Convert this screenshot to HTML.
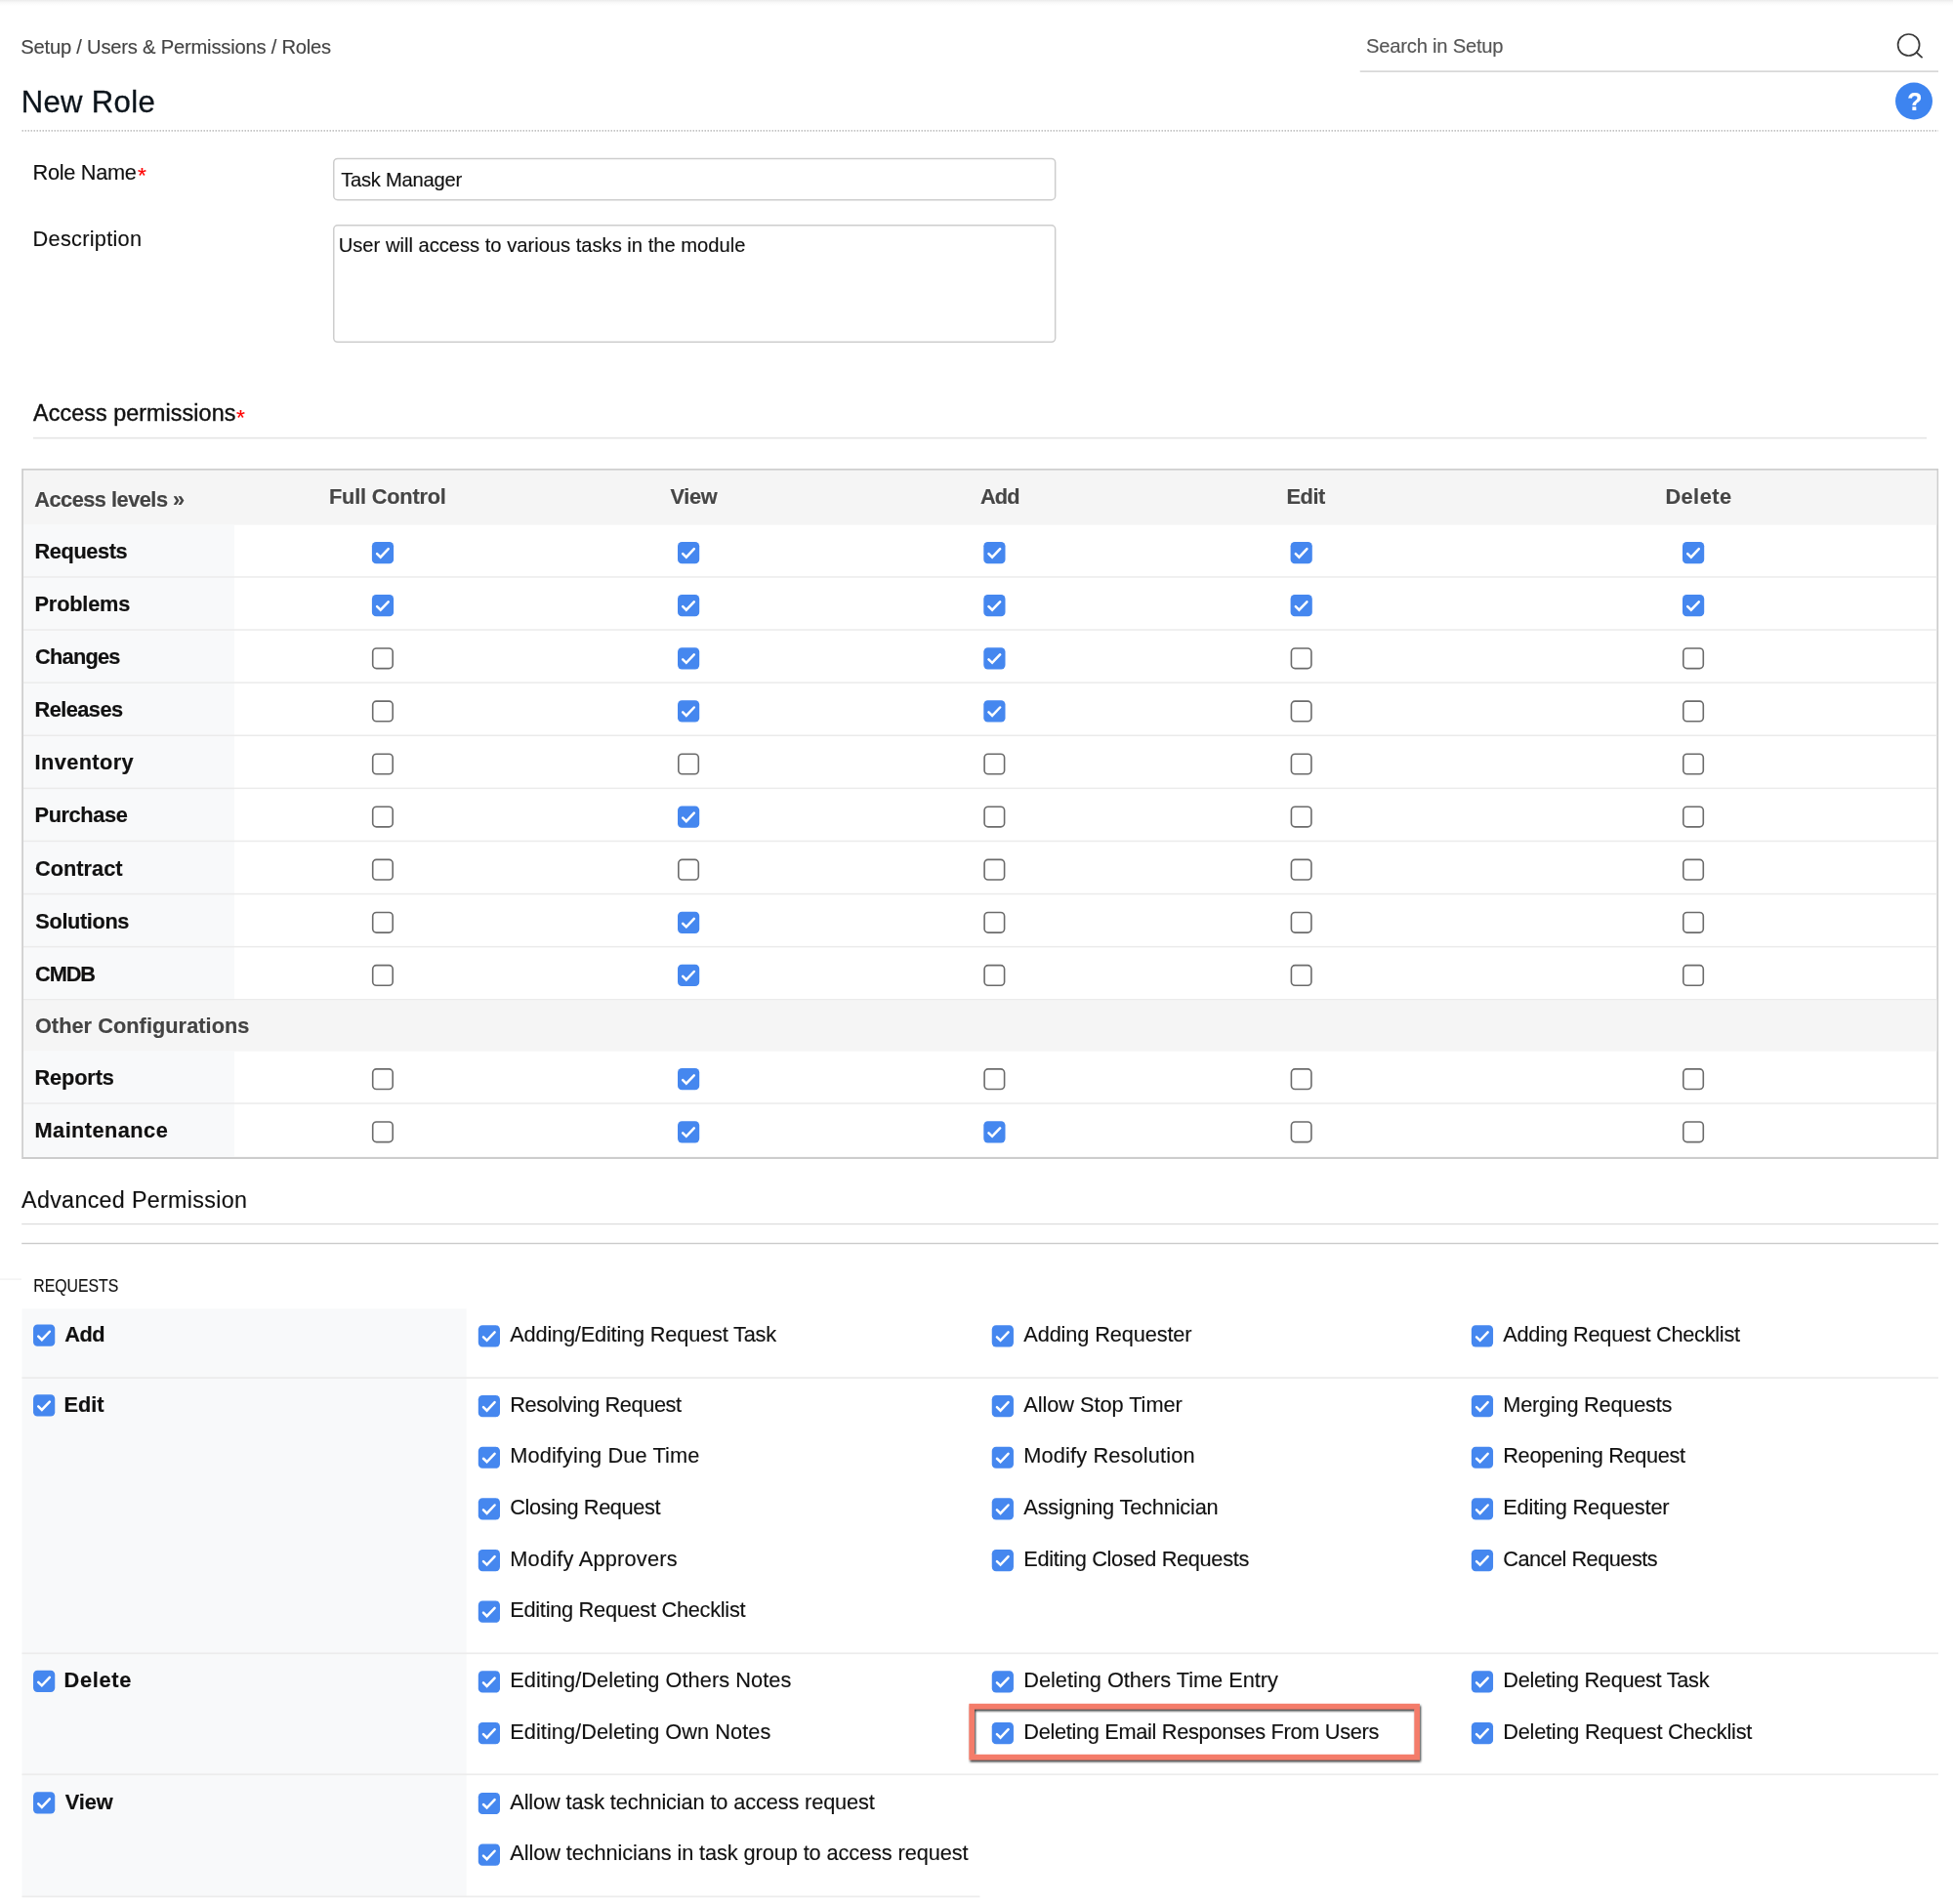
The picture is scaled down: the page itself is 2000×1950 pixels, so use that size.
<!DOCTYPE html>
<html lang="en"><head><meta charset="utf-8"><title>New Role</title>
<style>
html,body{margin:0;padding:0;background:#fff;}
body{width:2000px;height:1950px;position:relative;overflow:hidden;font-family:"Liberation Sans",sans-serif;}
.t{position:absolute;white-space:pre;line-height:1;}
.r{-webkit-text-stroke:0.14px currentColor;}
.bd{-webkit-text-stroke:0.2px currentColor;}
.b{position:absolute;}
#txt{position:absolute;left:0;top:0;width:2000px;height:1950px;will-change:transform;}
</style></head><body>

<div class="b" style="left:0;top:0;width:2000px;height:6px;background:linear-gradient(#ebebeb,#f9f9f9 45%,#fff);"></div>
<svg class="b" style="left:0;top:0" width="2000" height="1950" viewBox="0 0 2000 1950"><rect x="1392.70" y="72.50" width="592.30" height="1.20" fill="#c8c8c8" />
<line x1="22.5" y1="133.9" x2="1985" y2="133.9" stroke="#c4c4c4" stroke-width="1.7" stroke-dasharray="1.5 1.5"/>
<rect x="341.75" y="162.45" width="738.9" height="42.3" rx="4" fill="#fff" stroke="#cdcdcd" stroke-width="1.5"/>
<rect x="341.75" y="230.75" width="738.9" height="119.6" rx="4" fill="#fff" stroke="#cdcdcd" stroke-width="1.5"/>
<rect x="34.00" y="447.80" width="1939.00" height="1.60" fill="#e4e4e4" />
<rect x="22.20" y="479.90" width="1962.90" height="707.10" fill="#cdcdcd" />
<rect x="23.95" y="481.80" width="1959.40" height="703.10" fill="#fff" />
<rect x="23.95" y="481.80" width="1959.40" height="55.80" fill="#f5f5f5" />
<rect x="23.95" y="537.60" width="216.05" height="486.90" fill="#f8f9fa" />
<rect x="23.95" y="1024.50" width="1959.40" height="52.20" fill="#f5f5f5" />
<rect x="23.95" y="1076.70" width="216.05" height="108.20" fill="#f8f9fa" />
<rect x="23.95" y="590.20" width="1959.40" height="1.50" fill="#ebebeb" />
<rect x="23.95" y="644.30" width="1959.40" height="1.50" fill="#ebebeb" />
<rect x="23.95" y="698.40" width="1959.40" height="1.50" fill="#ebebeb" />
<rect x="23.95" y="752.50" width="1959.40" height="1.50" fill="#ebebeb" />
<rect x="23.95" y="806.60" width="1959.40" height="1.50" fill="#ebebeb" />
<rect x="23.95" y="860.70" width="1959.40" height="1.50" fill="#ebebeb" />
<rect x="23.95" y="914.80" width="1959.40" height="1.50" fill="#ebebeb" />
<rect x="23.95" y="968.90" width="1959.40" height="1.50" fill="#ebebeb" />
<rect x="23.95" y="1023.00" width="1959.40" height="1.50" fill="#ebebeb" />
<rect x="23.95" y="1129.30" width="1959.40" height="1.50" fill="#ebebeb" />
<rect x="22.20" y="1253.00" width="1962.90" height="1.20" fill="#dcdcdc" />
<rect x="22.20" y="1272.80" width="1962.90" height="1.40" fill="#cbcbcb" />
<rect x="0.00" y="1309.50" width="22.00" height="1.20" fill="#f0f0f0" />
<rect x="22.50" y="1340.30" width="455.20" height="601.50" fill="#f8f9fa" />
<rect x="22.50" y="1410.25" width="1962.50" height="1.70" fill="#ececec" />
<rect x="22.50" y="1692.45" width="1962.50" height="1.70" fill="#ececec" />
<rect x="22.50" y="1816.45" width="1962.50" height="1.70" fill="#ececec" />
<rect x="22.50" y="1941.55" width="980.90" height="1.70" fill="#ececec" />
<defs><g id="on"><rect width="22.2" height="22.2" rx="4.3" fill="#4587ef"/><path d="M5.2 12.1 L8.8 15.6 L16.8 7.2" fill="none" stroke="#fff" stroke-width="2.5" stroke-linecap="round" stroke-linejoin="miter"/></g><g id="off"><rect x="0.8" y="0.8" width="20.5" height="20.6" rx="3.8" fill="#fff" stroke="#6b6b6b" stroke-width="1.6"/></g><filter id="ds" x="-5%" y="-20%" width="110%" height="140%"><feDropShadow dx="1" dy="2" stdDeviation="1.3" flood-color="#000" flood-opacity="0.8"/></filter></defs>
<use href="#on" x="380.90" y="555.00"/>
<use href="#on" x="694.00" y="555.00"/>
<use href="#on" x="1007.30" y="555.00"/>
<use href="#on" x="1321.60" y="555.00"/>
<use href="#on" x="1723.00" y="555.00"/>
<use href="#on" x="380.90" y="609.10"/>
<use href="#on" x="694.00" y="609.10"/>
<use href="#on" x="1007.30" y="609.10"/>
<use href="#on" x="1321.60" y="609.10"/>
<use href="#on" x="1723.00" y="609.10"/>
<use href="#off" x="380.90" y="663.20"/>
<use href="#on" x="694.00" y="663.20"/>
<use href="#on" x="1007.30" y="663.20"/>
<use href="#off" x="1321.60" y="663.20"/>
<use href="#off" x="1723.00" y="663.20"/>
<use href="#off" x="380.90" y="717.30"/>
<use href="#on" x="694.00" y="717.30"/>
<use href="#on" x="1007.30" y="717.30"/>
<use href="#off" x="1321.60" y="717.30"/>
<use href="#off" x="1723.00" y="717.30"/>
<use href="#off" x="380.90" y="771.40"/>
<use href="#off" x="694.00" y="771.40"/>
<use href="#off" x="1007.30" y="771.40"/>
<use href="#off" x="1321.60" y="771.40"/>
<use href="#off" x="1723.00" y="771.40"/>
<use href="#off" x="380.90" y="825.50"/>
<use href="#on" x="694.00" y="825.50"/>
<use href="#off" x="1007.30" y="825.50"/>
<use href="#off" x="1321.60" y="825.50"/>
<use href="#off" x="1723.00" y="825.50"/>
<use href="#off" x="380.90" y="879.60"/>
<use href="#off" x="694.00" y="879.60"/>
<use href="#off" x="1007.30" y="879.60"/>
<use href="#off" x="1321.60" y="879.60"/>
<use href="#off" x="1723.00" y="879.60"/>
<use href="#off" x="380.90" y="933.70"/>
<use href="#on" x="694.00" y="933.70"/>
<use href="#off" x="1007.30" y="933.70"/>
<use href="#off" x="1321.60" y="933.70"/>
<use href="#off" x="1723.00" y="933.70"/>
<use href="#off" x="380.90" y="987.80"/>
<use href="#on" x="694.00" y="987.80"/>
<use href="#off" x="1007.30" y="987.80"/>
<use href="#off" x="1321.60" y="987.80"/>
<use href="#off" x="1723.00" y="987.80"/>
<use href="#off" x="380.90" y="1094.10"/>
<use href="#on" x="694.00" y="1094.10"/>
<use href="#off" x="1007.30" y="1094.10"/>
<use href="#off" x="1321.60" y="1094.10"/>
<use href="#off" x="1723.00" y="1094.10"/>
<use href="#off" x="380.90" y="1148.20"/>
<use href="#on" x="694.00" y="1148.20"/>
<use href="#on" x="1007.30" y="1148.20"/>
<use href="#off" x="1321.60" y="1148.20"/>
<use href="#off" x="1723.00" y="1148.20"/>
<use href="#on" x="34.05" y="1356.55"/>
<use href="#on" x="34.05" y="1428.35"/>
<use href="#on" x="34.05" y="1710.70"/>
<use href="#on" x="34.05" y="1835.25"/>
<use href="#on" x="489.80" y="1357.20"/>
<use href="#on" x="1015.75" y="1357.20"/>
<use href="#on" x="1506.85" y="1357.20"/>
<use href="#on" x="489.80" y="1429.00"/>
<use href="#on" x="1015.75" y="1429.00"/>
<use href="#on" x="1506.85" y="1429.00"/>
<use href="#on" x="489.80" y="1481.65"/>
<use href="#on" x="1015.75" y="1481.65"/>
<use href="#on" x="1506.85" y="1481.65"/>
<use href="#on" x="489.80" y="1534.30"/>
<use href="#on" x="1015.75" y="1534.30"/>
<use href="#on" x="1506.85" y="1534.30"/>
<use href="#on" x="489.80" y="1586.95"/>
<use href="#on" x="1015.75" y="1586.95"/>
<use href="#on" x="1506.85" y="1586.95"/>
<use href="#on" x="489.80" y="1639.60"/>
<use href="#on" x="489.80" y="1711.35"/>
<use href="#on" x="1015.75" y="1711.35"/>
<use href="#on" x="1506.85" y="1711.35"/>
<use href="#on" x="489.80" y="1764.00"/>
<use href="#on" x="1015.75" y="1764.00"/>
<use href="#on" x="1506.85" y="1764.00"/>
<use href="#on" x="489.80" y="1835.90"/>
<use href="#on" x="489.80" y="1888.55"/>
<rect x="995.15" y="1747.6" width="456" height="52" fill="none" stroke="#f47c6b" stroke-width="5.6" filter="url(#ds)"/>
<circle cx="1954.6" cy="46" r="11" fill="none" stroke="#3a3a3a" stroke-width="1.7"/><path d="M1962.6 53.6 L1968 58.6" stroke="#3a3a3a" stroke-width="1.9" stroke-linecap="round"/>
<circle cx="1960" cy="103.5" r="19" fill="#3d84f0"/></svg>
<div id="txt">
<span class="t r" id="t0" style="left:21.28px;top:37.90px;font-size:20.2px;font-weight:400;color:#444;letter-spacing:-0.218px;">Setup / Users &amp; Permissions / Roles</span>
<span class="t" id="t1" style="left:21.75px;top:88.96px;font-size:31.08px;font-weight:400;color:#0c141b;letter-spacing:0.314px;-webkit-text-stroke:0.3px #0c141b;">New Role</span>
<span class="t r" id="t2" style="left:1399.08px;top:36.90px;font-size:20.2px;font-weight:400;color:#555;letter-spacing:-0.228px;">Search in Setup</span>
<span class="t r" id="t3" style="left:33.61px;top:165.62px;font-size:21.76px;font-weight:400;color:#111;letter-spacing:-0.318px;">Role Name</span>
<span class="t r" id="t4" style="left:140.93px;top:167.60px;font-size:22.79px;font-weight:400;color:#f00;">*</span>
<span class="t r" id="t5" style="left:33.61px;top:233.62px;font-size:21.76px;font-weight:400;color:#111;letter-spacing:0.260px;">Description</span>
<span class="t r" id="t6" style="left:349.15px;top:173.90px;font-size:20.2px;font-weight:400;color:#111;letter-spacing:-0.246px;">Task Manager</span>
<span class="t r" id="t7" style="left:346.74px;top:240.90px;font-size:20.2px;font-weight:400;color:#111;letter-spacing:-0.016px;">User will access to various tasks in the module</span>
<span class="t" id="t8" style="left:34.05px;top:412.35px;font-size:23.31px;font-weight:400;color:#111;letter-spacing:0.084px;-webkit-text-stroke:0.4px #111;">Access permissions</span>
<span class="t r" id="t9" style="left:241.93px;top:415.61px;font-size:22.79px;font-weight:400;color:#f00;">*</span>
<span class="t bd" id="t10" style="left:35.26px;top:500.62px;font-size:21.76px;font-weight:700;color:#444;letter-spacing:-0.495px;text-shadow:0 0 2px #fff,0 0 2px #fff;">Access levels »</span>
<span class="t bd" id="t11" style="left:337.04px;top:497.62px;font-size:21.76px;font-weight:700;color:#464646;letter-spacing:-0.202px;text-shadow:0 0 2px #fff,0 0 2px #fff;">Full Control</span>
<span class="t bd" id="t12" style="left:686.45px;top:497.62px;font-size:21.76px;font-weight:700;color:#464646;letter-spacing:-0.355px;text-shadow:0 0 2px #fff,0 0 2px #fff;">View</span>
<span class="t bd" id="t13" style="left:1003.96px;top:497.62px;font-size:21.76px;font-weight:700;color:#464646;letter-spacing:-0.853px;text-shadow:0 0 2px #fff,0 0 2px #fff;">Add</span>
<span class="t bd" id="t14" style="left:1317.44px;top:497.62px;font-size:21.76px;font-weight:700;color:#464646;letter-spacing:-0.424px;text-shadow:0 0 2px #fff,0 0 2px #fff;">Edit</span>
<span class="t bd" id="t15" style="left:1705.39px;top:497.62px;font-size:21.76px;font-weight:700;color:#464646;letter-spacing:0.471px;text-shadow:0 0 2px #fff,0 0 2px #fff;">Delete</span>
<span class="t bd" id="t16" style="left:35.54px;top:553.62px;font-size:21.76px;font-weight:700;color:#111;letter-spacing:-0.396px;text-shadow:0 0 2px #fff,0 0 2px #fff;">Requests</span>
<span class="t bd" id="t17" style="left:35.54px;top:607.62px;font-size:21.76px;font-weight:700;color:#111;letter-spacing:-0.182px;text-shadow:0 0 2px #fff,0 0 2px #fff;">Problems</span>
<span class="t bd" id="t18" style="left:36.11px;top:661.62px;font-size:21.76px;font-weight:700;color:#111;letter-spacing:-0.762px;text-shadow:0 0 2px #fff,0 0 2px #fff;">Changes</span>
<span class="t bd" id="t19" style="left:35.54px;top:715.62px;font-size:21.76px;font-weight:700;color:#111;letter-spacing:-0.540px;text-shadow:0 0 2px #fff,0 0 2px #fff;">Releases</span>
<span class="t bd" id="t20" style="left:35.54px;top:769.62px;font-size:21.76px;font-weight:700;color:#111;letter-spacing:0.396px;text-shadow:0 0 2px #fff,0 0 2px #fff;">Inventory</span>
<span class="t bd" id="t21" style="left:35.54px;top:823.62px;font-size:21.76px;font-weight:700;color:#111;letter-spacing:-0.391px;text-shadow:0 0 2px #fff,0 0 2px #fff;">Purchase</span>
<span class="t bd" id="t22" style="left:36.11px;top:878.62px;font-size:21.76px;font-weight:700;color:#111;letter-spacing:-0.009px;text-shadow:0 0 2px #fff,0 0 2px #fff;">Contract</span>
<span class="t bd" id="t23" style="left:36.37px;top:932.62px;font-size:21.76px;font-weight:700;color:#111;letter-spacing:-0.382px;text-shadow:0 0 2px #fff,0 0 2px #fff;">Solutions</span>
<span class="t bd" id="t24" style="left:36.11px;top:986.62px;font-size:21.76px;font-weight:700;color:#111;letter-spacing:-1.123px;text-shadow:0 0 2px #fff,0 0 2px #fff;">CMDB</span>
<span class="t bd" id="t25" style="left:35.91px;top:1039.62px;font-size:21.76px;font-weight:700;color:#444;letter-spacing:0.041px;text-shadow:0 0 2px #fff,0 0 2px #fff;">Other Configurations</span>
<span class="t bd" id="t26" style="left:35.54px;top:1092.62px;font-size:21.76px;font-weight:700;color:#111;letter-spacing:-0.140px;text-shadow:0 0 2px #fff,0 0 2px #fff;">Reports</span>
<span class="t bd" id="t27" style="left:35.54px;top:1146.62px;font-size:21.76px;font-weight:700;color:#111;letter-spacing:0.445px;text-shadow:0 0 2px #fff,0 0 2px #fff;">Maintenance</span>
<span class="t r" id="t28" style="left:22.05px;top:1218.35px;font-size:23.31px;font-weight:400;color:#111;letter-spacing:0.307px;">Advanced Permission</span>
<span class="t r" id="t29" style="left:33.77px;top:1308.17px;font-size:18.65px;font-weight:400;color:#111;transform:scaleX(0.8486);transform-origin:1.53px 50%;">REQUESTS</span>
<span class="t bd" id="t30" style="left:66.26px;top:1355.62px;font-size:21.76px;font-weight:700;color:#111;letter-spacing:-0.503px;text-shadow:0 0 2px #fff,0 0 2px #fff;">Add</span>
<span class="t bd" id="t31" style="left:65.54px;top:1427.62px;font-size:21.76px;font-weight:700;color:#111;letter-spacing:-0.024px;text-shadow:0 0 2px #fff,0 0 2px #fff;">Edit</span>
<span class="t bd" id="t32" style="left:65.54px;top:1709.62px;font-size:21.76px;font-weight:700;color:#111;letter-spacing:0.700px;text-shadow:0 0 2px #fff,0 0 2px #fff;">Delete</span>
<span class="t bd" id="t33" style="left:66.85px;top:1834.62px;font-size:21.76px;font-weight:700;color:#111;letter-spacing:-0.122px;text-shadow:0 0 2px #fff,0 0 2px #fff;">View</span>
<span class="t r" id="t34" style="left:522.25px;top:1355.62px;font-size:21.76px;font-weight:400;color:#111;letter-spacing:-0.184px;">Adding/Editing Request Task</span>
<span class="t r" id="t35" style="left:1048.30px;top:1355.62px;font-size:21.76px;font-weight:400;color:#111;letter-spacing:-0.124px;">Adding Requester</span>
<span class="t r" id="t36" style="left:1539.25px;top:1355.62px;font-size:21.76px;font-weight:400;color:#111;letter-spacing:-0.272px;">Adding Request Checklist</span>
<span class="t r" id="t37" style="left:522.25px;top:1427.62px;font-size:21.76px;font-weight:400;color:#111;letter-spacing:-0.422px;">Resolving Request</span>
<span class="t r" id="t38" style="left:1048.30px;top:1427.62px;font-size:21.76px;font-weight:400;color:#111;letter-spacing:-0.048px;">Allow Stop Timer</span>
<span class="t r" id="t39" style="left:1539.25px;top:1427.62px;font-size:21.76px;font-weight:400;color:#111;letter-spacing:-0.219px;">Merging Requests</span>
<span class="t r" id="t40" style="left:522.25px;top:1479.62px;font-size:21.76px;font-weight:400;color:#111;letter-spacing:0.107px;">Modifying Due Time</span>
<span class="t r" id="t41" style="left:1048.30px;top:1479.62px;font-size:21.76px;font-weight:400;color:#111;letter-spacing:0.152px;">Modify Resolution</span>
<span class="t r" id="t42" style="left:1539.25px;top:1479.62px;font-size:21.76px;font-weight:400;color:#111;letter-spacing:-0.336px;">Reopening Request</span>
<span class="t r" id="t43" style="left:522.25px;top:1532.62px;font-size:21.76px;font-weight:400;color:#111;letter-spacing:-0.377px;">Closing Request</span>
<span class="t r" id="t44" style="left:1048.30px;top:1532.62px;font-size:21.76px;font-weight:400;color:#111;letter-spacing:-0.175px;">Assigning Technician</span>
<span class="t r" id="t45" style="left:1539.25px;top:1532.62px;font-size:21.76px;font-weight:400;color:#111;letter-spacing:-0.162px;">Editing Requester</span>
<span class="t r" id="t46" style="left:522.25px;top:1585.62px;font-size:21.76px;font-weight:400;color:#111;letter-spacing:0.220px;">Modify Approvers</span>
<span class="t r" id="t47" style="left:1048.30px;top:1585.62px;font-size:21.76px;font-weight:400;color:#111;letter-spacing:-0.327px;">Editing Closed Requests</span>
<span class="t r" id="t48" style="left:1539.25px;top:1585.62px;font-size:21.76px;font-weight:400;color:#111;letter-spacing:-0.515px;">Cancel Requests</span>
<span class="t r" id="t49" style="left:522.25px;top:1637.62px;font-size:21.76px;font-weight:400;color:#111;letter-spacing:-0.272px;">Editing Request Checklist</span>
<span class="t r" id="t50" style="left:522.25px;top:1709.62px;font-size:21.76px;font-weight:400;color:#111;letter-spacing:0.054px;">Editing/Deleting Others Notes</span>
<span class="t r" id="t51" style="left:1048.30px;top:1709.62px;font-size:21.76px;font-weight:400;color:#111;letter-spacing:-0.023px;">Deleting Others Time Entry</span>
<span class="t r" id="t52" style="left:1539.25px;top:1709.62px;font-size:21.76px;font-weight:400;color:#111;letter-spacing:-0.296px;">Deleting Request Task</span>
<span class="t r" id="t53" style="left:522.25px;top:1762.62px;font-size:21.76px;font-weight:400;color:#111;letter-spacing:0.042px;">Editing/Deleting Own Notes</span>
<span class="t r" id="t54" style="left:1048.30px;top:1762.62px;font-size:21.76px;font-weight:400;color:#111;letter-spacing:-0.313px;">Deleting Email Responses From Users</span>
<span class="t r" id="t55" style="left:1539.25px;top:1762.62px;font-size:21.76px;font-weight:400;color:#111;letter-spacing:-0.241px;">Deleting Request Checklist</span>
<span class="t r" id="t56" style="left:522.25px;top:1834.62px;font-size:21.76px;font-weight:400;color:#111;letter-spacing:-0.126px;">Allow task technician to access request</span>
<span class="t r" id="t57" style="left:522.25px;top:1886.62px;font-size:21.76px;font-weight:400;color:#111;letter-spacing:-0.096px;">Allow technicians in task group to access request</span>
<span class="t bd" id="t58" style="left:1953.16px;top:92.07px;font-size:24.86px;font-weight:700;color:#fff;">?</span>
</div></body></html>
